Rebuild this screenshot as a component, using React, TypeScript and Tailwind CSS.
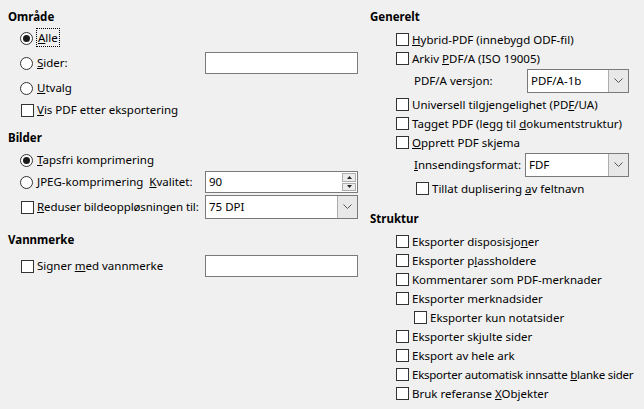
import type { FC, ReactNode } from 'react';

// ── Small form glyphs ─────────────────────────────────────────────────────────
const Radio: FC<{ checked?: boolean }> = ({ checked }) => (
    <span className="w-[13px] h-[13px] rounded-full border border-[#333] bg-white flex items-center justify-center shrink-0">
        {checked && <span className="w-[7px] h-[7px] rounded-full bg-[#1a1a1a]" />}
    </span>
);

const Box: FC = () => (
    <span className="w-[13px] h-[13px] border border-[#333] bg-white shrink-0" />
);

const Chevron: FC = () => (
    <svg width="9" height="6" viewBox="0 0 9 6" className="text-[#555]">
        <path d="M0.5 0.5 L4.5 4.5 L8.5 0.5" fill="none" stroke="currentColor" strokeWidth="1" />
    </svg>
);

const Select: FC<{ value: string; w: string }> = ({ value, w }) => (
    <div className={`${w} h-[24px] border border-[#7a7a7a] bg-white flex items-stretch shrink-0`}>
        <span className="flex-1 pl-[3px] flex items-center">{value}</span>
        <span className="w-[20px] bg-[#e8e8e8] border-l border-[#adadad] flex items-center justify-center">
            <Chevron />
        </span>
    </div>
);

const TextBox: FC<{ w?: string }> = ({ w = 'w-[153px]' }) => (
    <div className={`${w} h-[22px] border border-[#7a7a7a] bg-white shrink-0`} />
);

// ── Rows ──────────────────────────────────────────────────────────────────────
const Heading: FC<{ children: ReactNode }> = ({ children }) => (
    <div className="h-[20px] flex items-center font-bold">{children}</div>
);

const RadioRow: FC<{ checked?: boolean; children: ReactNode }> = ({ checked, children }) => (
    <div className="h-[20px] flex items-center gap-[4px] pl-[12px]">
        <Radio checked={checked} />
        <span>{children}</span>
    </div>
);

const Check: FC<{ children: ReactNode; indent?: string }> = ({ children, indent = 'pl-[26px]' }) => (
    <div className={`h-[19px] flex items-center gap-[3px] ${indent}`}>
        <Box />
        <span>{children}</span>
    </div>
);

export default function App() {
    return (
        <div
            className="w-[644px] h-[409px] bg-[#f0f0f0] text-black text-[11.5px] leading-none whitespace-nowrap flex overflow-hidden"
            style={{ fontFamily: '"Noto Sans", sans-serif' }}
        >
            {/* ── Left column ── */}
            <div className="w-[362px] shrink-0 pl-[8px] pt-[7px] flex flex-col">
                <Heading>Område</Heading>
                <div className="mt-[1px]">
                    <RadioRow checked>
                        <span className="outline outline-1 outline-dotted outline-black px-[1px] py-[1px]"><u>A</u>lle</span>
                    </RadioRow>
                </div>
                <div className="mt-[4px] h-[22px] flex items-center justify-between pr-[4px]">
                    <div className="flex items-center gap-[4px] pl-[12px]">
                        <Radio />
                        <span><u>S</u>ider:</span>
                    </div>
                    <TextBox />
                </div>
                <div className="mt-[4px]"><RadioRow><u>U</u>tvalg</RadioRow></div>
                <div className="mt-[2px] h-[20px] flex items-center gap-[3px] pl-[13px]">
                    <Box />
                    <span><u>V</u>is PDF etter eksportering</span>
                </div>

                <div className="mt-[8px]"><Heading>Bilder</Heading></div>
                <div className="mt-[2px] h-[20px] flex items-center gap-[4px] pl-[12px]">
                    <Radio checked />
                    <span><u>T</u>apsfri komprimering</span>
                </div>
                <div className="mt-[1px] h-[22px] flex items-center justify-between pr-[4px]">
                    <div className="flex items-center gap-[4px] pl-[12px]">
                        <Radio />
                        <span><u>J</u>PEG-komprimering&nbsp;&nbsp;<u>K</u>valitet:</span>
                    </div>
                    <div className="w-[153px] h-[22px] border border-[#7a7a7a] bg-white flex items-stretch">
                        <span className="flex-1 pl-[3px] flex items-center">90</span>
                        <span className="w-[16px] flex flex-col gap-[1px] p-[1px]">
                            <span className="flex-1 bg-[#ececec] border border-[#adadad] flex items-center justify-center">
                                <svg width="5" height="3" viewBox="0 0 5 3"><path d="M0 3 L2.5 0 L5 3 Z" fill="#222" /></svg>
                            </span>
                            <span className="flex-1 bg-[#ececec] border border-[#adadad] flex items-center justify-center">
                                <svg width="5" height="3" viewBox="0 0 5 3"><path d="M0 0 L2.5 3 L5 0 Z" fill="#222" /></svg>
                            </span>
                        </span>
                    </div>
                </div>
                <div className="mt-[2px] h-[24px] flex items-center justify-between pr-[4px]">
                    <div className="flex items-center gap-[3px] pl-[13px]">
                        <Box />
                        <span className="tracking-[-0.1px]"><u>R</u>eduser bildeoppløsningen til:</span>
                    </div>
                    <Select value="75 DPI" w="w-[153px]" />
                </div>

                <div className="mt-[11px]"><Heading>Vannmerke</Heading></div>
                <div className="mt-[5px] h-[22px] flex items-center justify-between pr-[4px]">
                    <div className="flex items-center gap-[3px] pl-[13px]">
                        <Box />
                        <span>Signer <u>m</u>ed vannmerke</span>
                    </div>
                    <TextBox />
                </div>
            </div>

            {/* ── Right column ── */}
            <div className="w-[282px] shrink-0 pl-[8px] pt-[7px] pr-[15px] flex flex-col">
                <Heading>Generelt</Heading>
                <div className="mt-[3px]">
                    <Check><u>H</u>ybrid-PDF (innebygd ODF-fil)</Check>
                    <Check>Arkiv <u>P</u>DF/A (ISO 19005)</Check>
                </div>
                <div className="mt-[1px] h-[24px] flex items-center justify-between pl-[44px]">
                    <span>PDF/A versjon:</span>
                    <Select value="PDF/A-1b" w="w-[102px]" />
                </div>
                <div className="mt-[2px]">
                    <Check>Universell tilgjengelighet (PD<u>F</u>/UA)</Check>
                    <Check>Tagget PDF (legg til <u>d</u>okumentstruktur)</Check>
                    <Check><u>O</u>pprett PDF skjema</Check>
                </div>
                <div className="mt-[1px] h-[24px] flex items-center justify-between pl-[44px]">
                    <span><u>I</u>nnsendingsformat:</span>
                    <Select value="FDF" w="w-[104px]" />
                </div>
                <div className="mt-[2px]">
                    <Check indent="pl-[46px]">Tillat duplisering <u>a</u>v feltnavn</Check>
                </div>

                <div className="mt-[11px]"><Heading>Struktur</Heading></div>
                <div className="mt-[3px]">
                    <Check>Eksporter disposisjo<u>n</u>er</Check>
                    <Check>Eksporter p<u>l</u>assholdere</Check>
                    <Check>Kommentarer som PDF-merknader</Check>
                    <Check>Eksporter merknadsider</Check>
                    <Check indent="pl-[44px]">Eksporter kun notatsider</Check>
                    <Check>Eksporter skjulte sider</Check>
                    <Check>Eksport av hele ark</Check>
                    <Check><span className="tracking-[-0.25px]">Eksporter automatisk innsatte <u>b</u>lanke sider</span></Check>
                    <Check>Bruk referanse <u>X</u>Objekter</Check>
                </div>
            </div>
        </div>
    );
}
